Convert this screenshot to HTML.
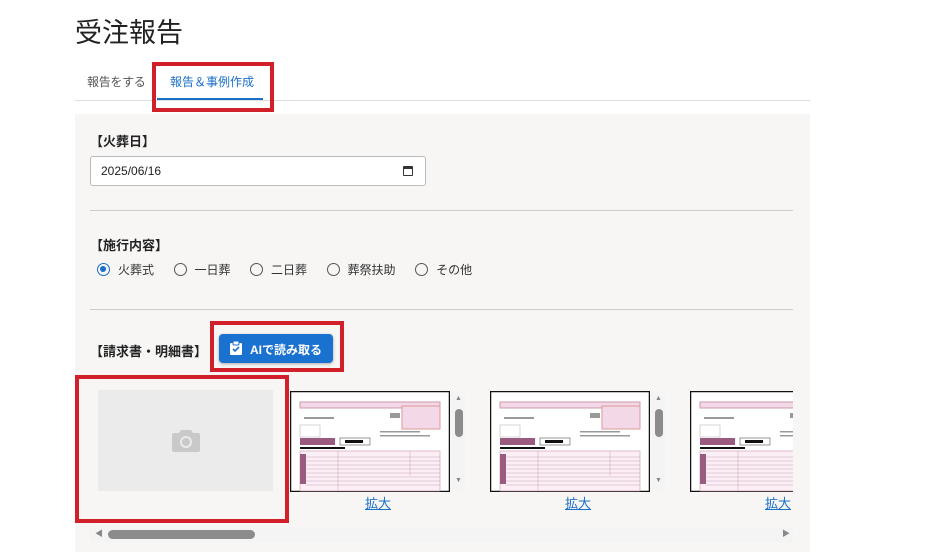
<!DOCTYPE html><html><head><meta charset="utf-8"><style>
*{box-sizing:border-box;margin:0;padding:0}
body{width:936px;height:552px;overflow:hidden;background:#fff;font-family:"Liberation Sans","Noto Sans CJK JP",sans-serif;position:relative;color:#222}
.a{position:absolute}
.red{position:absolute;border:4px solid #d2202b}
.lbl{font-size:13px;font-weight:bold;color:#222}
.rad{display:inline-block;width:13px;height:13px;border:1.5px solid #555;border-radius:50%;vertical-align:-2px;margin-right:8px;position:relative}
.rad.on{border-color:#1a6fc9}
.rad.on:after{content:"";position:absolute;left:2px;top:2px;width:6px;height:6px;border-radius:50%;background:#1a6fc9}
.ri{font-size:12px;color:#333;margin-right:19.5px}
.link{font-size:13px;color:#1a6fc9;text-decoration:underline}
.vs{position:absolute;width:13px;height:100px;background:#f4f4f4}
</style></head><body>
<div class="a" style="left:75px;top:11px;font-size:27px;color:#222">受注報告</div>
<div class="a" style="left:87px;top:73px;font-size:12px;color:#555;letter-spacing:-0.3px">報告をする</div>
<div class="a" style="left:170px;top:73px;font-size:12px;color:#1a6fc9">報告＆事例作成</div>
<div class="a" style="left:157px;top:98px;width:106px;height:2px;background:#1a6fc9"></div>
<div class="a" style="left:75px;top:100px;width:735px;height:1px;background:#ddd"></div>
<div class="red" style="left:152px;top:62px;width:122px;height:50px"></div>
<div class="a" style="left:75px;top:114px;width:735px;height:438px;background:#f7f6f5"></div>
<div class="a lbl" style="left:90px;top:131px">【火葬日】</div>
<div class="a" style="left:90px;top:156px;width:336px;height:30px;border:1px solid #bbb;border-radius:3px;background:#fff;font-size:12px;padding:7px 0 0 10px">2025/06/16
<div class="a" style="right:12px;top:9px;width:10px;height:10px;border:1.5px solid #333;border-top-width:3px;border-radius:1px"></div></div>
<div class="a" style="left:90px;top:210px;width:703px;height:1px;background:#ccc"></div>
<div class="a lbl" style="left:90px;top:235px">【施行内容】</div>
<div class="a" style="left:97px;top:261px;white-space:nowrap"><span class="rad on"></span><span class="ri">火葬式</span><span class="rad"></span><span class="ri">一日葬</span><span class="rad"></span><span class="ri">二日葬</span><span class="rad"></span><span class="ri">葬祭扶助</span><span class="rad"></span><span class="ri">その他</span></div>
<div class="a" style="left:90px;top:309px;width:703px;height:1px;background:#ccc"></div>
<div class="a lbl" style="left:90px;top:341px">【請求書・明細書】</div>
<div class="a" style="left:219px;top:334px;width:114px;height:29px;background:#1a72d0;border-radius:4px;box-shadow:0 1px 3px rgba(0,0,0,.3);color:#fff;font-size:12px;font-weight:bold;padding:7px 0 0 31px">AIで読み取る
<svg class="a" style="left:11px;top:7px" width="12" height="14" viewBox="0 0 12 14"><rect x="0" y="2" width="12" height="12" rx="1" fill="#fff"/><rect x="3" y="0" width="6" height="4" rx="1" fill="#fff" stroke="#1a72d0"/><path d="M3 8l2 2 4-4" stroke="#1a72d0" stroke-width="1.6" fill="none"/></svg></div>
<div class="red" style="left:210px;top:321px;width:134px;height:51px"></div>
<div class="red" style="left:75px;top:375px;width:214px;height:148px"></div>
<div class="a" style="left:98px;top:390px;width:175px;height:101px;background:#ebebeb"></div>
<svg class="a" style="left:172px;top:428px" width="28" height="24" viewBox="0 0 28 24"><path d="M9 2h10l2 3h5a2 2 0 0 1 2 2v15a2 2 0 0 1-2 2H2a2 2 0 0 1-2-2V7a2 2 0 0 1 2-2h5z" fill="#c9c9c9"/><circle cx="14" cy="14" r="6" fill="#ebebeb"/><circle cx="14" cy="14" r="4" fill="#c9c9c9"/></svg>
<svg width="0" height="0" style="position:absolute"><defs><g id="doc"><rect x="0.5" y="0.5" width="159" height="100" fill="#fff" stroke="#111" stroke-width="1.5"/><rect x="10" y="11" width="140" height="6" fill="#f3d9e8" stroke="#c9a"/><rect x="10" y="34" width="20" height="12" fill="#fff" stroke="#aaa" stroke-width=".5"/><rect x="10" y="47" width="35" height="7" fill="#9b5a80"/><rect x="50" y="47" width="30" height="7" fill="#fff" stroke="#333" stroke-width=".5"/><rect x="55" y="49" width="18" height="3" fill="#111"/><rect x="10" y="56" width="45" height="2" fill="#111"/><rect x="112" y="15" width="38" height="23" fill="#f3d9e8" stroke="#d99"/><rect x="10" y="60" width="140" height="40" fill="#fbeef5" stroke="#c9a" stroke-width=".6"/><rect x="10" y="63" width="6" height="30" fill="#9b5a80"/><g stroke="#bb8fa8" stroke-width=".4"><path d="M16 66h134M16 70h134M16 74h134M16 78h134M16 82h134M16 86h134M16 90h134M16 94h134M48 60v40M120 60v25"/></g><g fill="#999"><rect x="14" y="26" width="30" height="2"/><rect x="100" y="22" width="10" height="5"/><rect x="90" y="40" width="40" height="1.5"/><rect x="90" y="44" width="50" height="1.5"/></g></g></defs></svg>
<svg class="a" style="left:290px;top:391px" width="160" height="101"><use href="#doc"/></svg>
<svg class="a" style="left:490px;top:391px" width="160" height="101"><use href="#doc"/></svg>
<div class="a" style="left:690px;top:391px;width:103px;height:101px;overflow:hidden"><svg width="160" height="101"><use href="#doc"/></svg></div>
<div class="vs" style="left:452px;top:391px"><div class="a" style="left:3px;top:18px;width:8px;height:28px;background:#8c8c8c;border-radius:4px"></div><div class="a" style="left:3px;top:4px;font-size:7px;color:#888">▲</div><div class="a" style="left:3px;top:86px;font-size:7px;color:#888">▼</div></div>
<div class="vs" style="left:652px;top:391px"><div class="a" style="left:3px;top:18px;width:8px;height:28px;background:#8c8c8c;border-radius:4px"></div><div class="a" style="left:3px;top:4px;font-size:7px;color:#888">▲</div><div class="a" style="left:3px;top:86px;font-size:7px;color:#888">▼</div></div>
<div class="a link" style="left:365px;top:493px">拡大</div>
<div class="a link" style="left:565px;top:493px">拡大</div>
<div class="a link" style="left:765px;top:493px">拡大</div>
<div class="a" style="left:90px;top:527px;width:703px;height:15px;background:#f4f4f4"></div>
<div class="a" style="left:108px;top:530px;width:147px;height:9px;background:#8c8c8c;border-radius:5px"></div>
<div class="a" style="left:95px;top:528px;font-size:8px;color:#888">◀</div>
<div class="a" style="left:782px;top:528px;font-size:8px;color:#888">▶</div>
</body></html>
